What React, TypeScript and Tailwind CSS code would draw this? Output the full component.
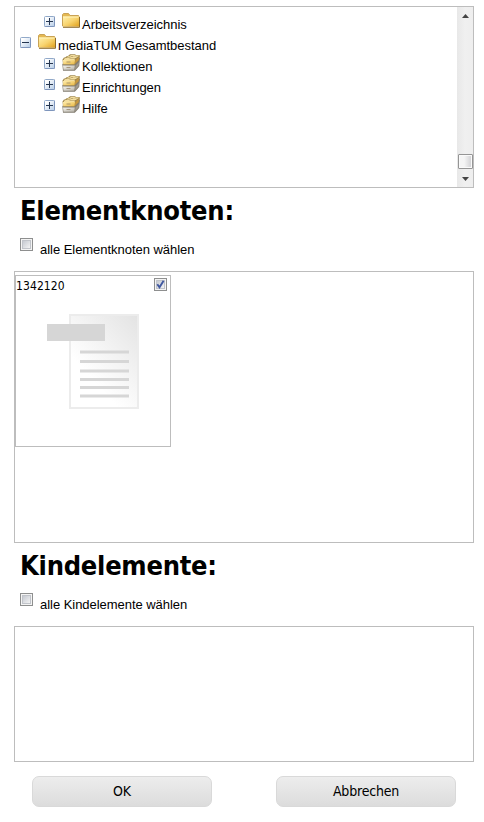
import React from 'react';

function Toggle({ open = false }: { open?: boolean }) {
  return (
    <svg width="11" height="11" viewBox="0 0 11 11" className="block shrink-0">
      <defs>
        <linearGradient id="toggle" x1="0" y1="0" x2="1" y2="1">
          <stop offset="0.2" stopColor="#ffffff" />
          <stop offset="1" stopColor="#b4cbe6" />
        </linearGradient>
      </defs>
      <rect x="0.5" y="0.5" width="10" height="10" rx="1" fill="url(#toggle)" stroke="#91a9c9" />
      <path d="M.5 10.5h10v-10" fill="none" stroke="#7189b4" strokeOpacity=".6" />
      <path d={open ? 'M2 5.5h7' : 'M2 5.5h7M5.5 2v7'} stroke="#253650" strokeWidth="1" />
    </svg>
  );
}

function Folder() {
  return (
    <svg width="18" height="15" viewBox="0 0 18 15" className="block shrink-0">
      <defs>
        <linearGradient id="folder" x1="0" y1="0" x2="1" y2="1">
          <stop offset="0" stopColor="#fff0aa" />
          <stop offset="0.5" stopColor="#f8d470" />
          <stop offset="1" stopColor="#e0a01c" />
        </linearGradient>
      </defs>
      <path d="M.5 13V1.5L1.5.5h5L8 2.5h8.5l.5 1V13z" fill="#e4b852" stroke="#c9a255" />
      <path d="M1 3.5h16v10H1z" fill="url(#folder)" />
      <path d="M1 4h15.5" stroke="#fff3bc" />
      <path d="M1 14.3h16.5V4" fill="none" stroke="#8b6a2a" strokeWidth="1" />
    </svg>
  );
}

function Drawer() {
  return (
    <svg width="18" height="17" viewBox="0 0 18 17" className="block shrink-0">
      <defs>
        <linearGradient id="drawerTop" x1="0" y1="0" x2="1" y2="1">
          <stop offset="0" stopColor="#ffeeb0" />
          <stop offset="1" stopColor="#e9b843" />
        </linearGradient>
        <linearGradient id="drawerBase" x1="0" y1="0" x2="1" y2="1">
          <stop offset="0" stopColor="#f6f4ee" />
          <stop offset="1" stopColor="#b6b2a8" />
        </linearGradient>
      </defs>
      <path d="M.3 10L4 7.5l14-4-.8 8.5-4.4 4.7H1z" fill="#827c70" />
      <path d="M.5 5.5L2 3.5h1L5 2h1l2-1.8h5L14 1h3.5l.4 1-.8 4-4.6 4.5H1z" fill="#a38a50" />
      <path d="M2 5l1.5-1H7l1 .6h5L12.5 6H2zM4.5 3.5L6 2.3h3l1 .6h5l-1 1.2H9L8 3.5zM7.5 2L9 1h3.5l1 .6H17l-1 1.2h-5L10 2z" fill="#f4dfa0" />
      <path d="M1 6h12l-.5 4.3H1.2z" fill="url(#drawerTop)" />
      <path d="M13.5 6L17 2.8l-.7 3.5-3.5 3.5z" fill="#c7973c" />
      <path d="M1 11.5h11.8l-.5 4.3H1.5z" fill="url(#drawerBase)" />
      <path d="M13.5 11.5L17 8l-.5 3.5-3.5 3.7z" fill="#a09a8d" />
      <path d="M4.5 8h4M4.5 13.5h4" stroke="#998869" strokeWidth=".8" />
    </svg>
  );
}

function Row({ label, kind = 'drawer', root = false }: { label: string; kind?: string; root?: boolean }) {
  return (
    <div className={`flex h-[21px] items-start ${root ? 'pl-[5px]' : 'pl-[29px]'}`}>
      <div className="pt-[3px]"><Toggle open={root} /></div>
      <div className={`ml-[7px] w-5 ${kind === 'drawer' ? '-mt-px' : ''}`}>{kind === 'drawer' ? <Drawer /> : <Folder />}</div>
      <span className="pt-[3px] text-[13px] leading-[18px] tracking-[-0.04px] whitespace-nowrap">{label}</span>
    </div>
  );
}

function Checkbox({ checked = false }: { checked?: boolean }) {
  return (
    <svg width="13" height="13" viewBox="0 0 13 13" className="block shrink-0">
      <defs>
        <linearGradient id="check" x1="0" y1="0" x2="1" y2="1">
          <stop offset="0" stopColor="#c3c7cf" />
          <stop offset="1" stopColor="#f6f6f6" />
        </linearGradient>
      </defs>
      <rect x=".5" y=".5" width="12" height="12" fill="#f4f4f4" stroke="#8e8f8f" />
      <rect x="2.5" y="2.5" width="8" height="8" fill="url(#check)" stroke="#c1c4ca" />
      {checked && <path d="M3.3 6.2l2.2 3L9.6 2.8" fill="none" stroke="#4058a0" strokeWidth="1.9" />}
    </svg>
  );
}

function Section({ title, label }: { title: string; label: string }) {
  return (
    <div className="h-[83px] pl-[6px]">
      <h1 className="h-[50px] pt-[5px] font-['DejaVu_Sans_Condensed','DejaVu_Sans',sans-serif] text-[27px] leading-[36px] font-bold tracking-[-0.25px] whitespace-nowrap">{title}</h1>
      <label className="flex items-start">
        <Checkbox />
        <span className="ml-[7px] pt-[3px] text-[13px] leading-[18px] tracking-[-0.04px]">{label}</span>
      </label>
    </div>
  );
}

function Document() {
  return (
    <svg width="92" height="95" viewBox="0 0 92 95" className="mt-[20px] ml-[31px] block">
      <defs>
        <linearGradient id="paper" x1="1" y1="0" x2=".4" y2=".75">
          <stop offset="0" stopColor="#e3e3e3" />
          <stop offset="1" stopColor="#ffffff" />
        </linearGradient>
      </defs>
      <rect x="23" y="1" width="68" height="93" fill="url(#paper)" stroke="#ececec" strokeWidth="2" />
      <rect x="0" y="10" width="58" height="17" fill="#d6d6d6" />
      <path d="M33 38h49M33 47.5h49M33 57h49M33 65.5h49M33 73.5h49M33 82h49" stroke="#d6d6d6" strokeWidth="3" />
    </svg>
  );
}

function Button({ children }: { children: React.ReactNode }) {
  return (
    <button className="h-[31px] w-[180px] rounded-[7px] border border-[#d9d9d9] bg-linear-to-b from-[#ededed] to-[#dcdcdc] font-['DejaVu_Sans_Condensed','DejaVu_Sans',sans-serif] text-[14px] leading-[29px] tracking-[-0.2px]">
      {children}
    </button>
  );
}

export default function App() {
  return (
    <main className="h-[822px] w-[484px] overflow-hidden bg-white pt-[6px] pl-[14px] font-['Liberation_Sans',Arial,sans-serif] text-black">
      <section className="flex h-[182px] w-[460px] justify-between border border-[#bdbdbd]">
        <div className="pt-[6px]">
          <Row label="Arbeitsverzeichnis" kind="folder" />
          <Row label="mediaTUM Gesamtbestand" kind="folder" root />
          <Row label="Kollektionen" />
          <Row label="Einrichtungen" />
          <Row label="Hilfe" />
        </div>
        <div className="flex w-[16px] flex-col items-center bg-linear-to-r from-[#e8e8e8] via-[#f0f0f0] to-[#eeeeee] pt-[7px] pb-[6px]">
          <svg width="7" height="4" viewBox="0 0 7 4" className="block"><path d="M0 4L3.5 0 7 4z" fill="#444" /></svg>
          <div className="mt-auto h-[15px] w-[15px] rounded-[1px] border border-[#959595] bg-linear-to-r from-[#f5f5f5] from-40% to-[#cfcfd2] shadow-[inset_0_0_0_1px_#fafafa]" />
          <svg width="7" height="4" viewBox="0 0 7 4" className="mt-[8px] block"><path d="M0 0h7L3.5 4z" fill="#444" /></svg>
        </div>
      </section>
      <Section title="Elementknoten:" label="alle Elementknoten wählen" />
      <section className="h-[272px] w-[460px] border border-[#bdbdbd] pt-[3px]">
        <div className="h-[172px] w-[156px] border border-[#bdbdbd]">
          <div className="flex h-[18px] justify-between pt-[2px] pr-[3px]">
            <span className="font-['DejaVu_Sans_Condensed','DejaVu_Sans',sans-serif] text-[12px] leading-4 tracking-[0.1px]">1342120</span>
            <Checkbox checked />
          </div>
          <Document />
        </div>
      </section>
      <Section title="Kindelemente:" label="alle Kindelemente wählen" />
      <section className="h-[136px] w-[460px] border border-[#bdbdbd]" />
      <div className="mt-[14px] flex gap-16 pl-[18px]">
        <Button>OK</Button>
        <Button>Abbrechen</Button>
      </div>
    </main>
  );
}
